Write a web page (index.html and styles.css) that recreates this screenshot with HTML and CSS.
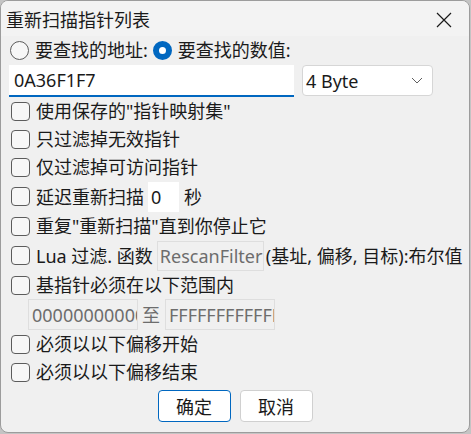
FILE: index.html
```html
<!DOCTYPE html>
<html lang="zh-CN">
<head>
<meta charset="utf-8">
<title>重新扫描指针列表</title>
<link rel="stylesheet" href="styles.css">
</head>
<body>
<div class="window">
  <div class="titlebar">
    <span class="title">重新扫描指针列表</span>
    <svg class="close" width="16" height="16" viewBox="0 0 16 16"><path d="M1 1 L15 15 M15 1 L1 15" stroke="#1a1a1a" stroke-width="1.2" fill="none"/></svg>
  </div>
  <div class="content">
    <div class="row r-radio">
      <span class="radio"></span><span class="lbl">要查找的地址:</span>
      <span class="radio on"></span><span class="lbl">要查找的数值:</span>
    </div>
    <div class="row r-input">
      <div class="addr">0A36F1F7</div>
      <div class="select"><span>4 Byte</span><svg width="12" height="7" viewBox="0 0 12 7"><path d="M1 1 L6 6 L11 1" stroke="#606060" stroke-width="1" fill="none"/></svg></div>
    </div>
    <div class="row"><span class="box"></span><span class="lbl">使用保存的"指针映射集"</span></div>
    <div class="row"><span class="box"></span><span class="lbl">只过滤掉无效指针</span></div>
    <div class="row"><span class="box"></span><span class="lbl">仅过滤掉可访问指针</span></div>
    <div class="row r-delay"><span class="box"></span><span class="lbl">延迟重新扫描</span><div class="num">0</div><span class="lbl">秒</span></div>
    <div class="row"><span class="box"></span><span class="lbl">重复"重新扫描"直到你停止它</span></div>
    <div class="row r-lua"><span class="box"></span><span class="lbl">Lua 过滤. 函数</span><input class="dis lua" type="text" value="RescanFilter" disabled><span class="lbl">(基址, 偏移, 目标):布尔值</span></div>
    <div class="row"><span class="box"></span><span class="lbl">基指针必须在以下范围内</span></div>
    <div class="row r-range"><input class="dis rng" type="text" value="0000000000000000" disabled><span class="to">至</span><input class="dis rng" type="text" value="FFFFFFFFFFFFFFFF" disabled></div>
    <div class="row"><span class="box"></span><span class="lbl">必须以以下偏移开始</span></div>
    <div class="row"><span class="box"></span><span class="lbl">必须以以下偏移结束</span></div>
    <div class="buttons">
      <button class="btn primary">确定</button>
      <button class="btn">取消</button>
    </div>
  </div>
</div>
</body>
</html>
```
FILE: styles.css
```css
html, body {
  margin: 0;
  padding: 0;
}
body {
  width: 471px;
  height: 434px;
  background: #c4c4c4;
  font-family: "Noto Sans", "Noto Sans CJK SC", sans-serif;
  color: #1a1a1a;
  overflow: hidden;
}
.window {
  width: 470px;
  height: 433px;
  box-sizing: border-box;
  border: 1px solid #9c9c9c;
  border-radius: 8px;
  background: #f0f0f0;
  overflow: hidden;
  display: flex;
  flex-direction: column;
}
.titlebar {
  height: 35px;
  flex: none;
  background: #f3f3f3;
  display: flex;
  align-items: center;
  justify-content: space-between;
  padding: 2px 17px 0 5px;
  box-sizing: border-box;
}
.title {
  font-size: 18px;
  line-height: 1;
}
.close {
  display: block;
}
.content {
  padding: 0 0 0 9px;
  display: flex;
  flex-direction: column;
}
.row {
  display: flex;
  align-items: center;
  height: 28px;
  flex: none;
}
.lbl {
  font-size: 18px;
  line-height: 1;
  white-space: nowrap;
}
.radio {
  width: 19px;
  height: 19px;
  box-sizing: border-box;
  border: 1px solid #5c5c5c;
  border-radius: 50%;
  background: #f7f7f7;
  margin-right: 6px;
  flex: none;
}
.radio.on {
  border: 6px solid #0067c0;
  background: #ffffff;
  margin-left: 5px;
}
.r-input {
  height: 32px;
  margin-top: 1px;
}
.addr {
  width: 285px;
  height: 32px;
  box-sizing: border-box;
  margin-left: -1px;
  background: #ffffff;
  border-bottom: 2px solid #0067c0;
  font-size: 18px;
  line-height: 30px;
  padding-left: 5px;
}
.select {
  width: 131px;
  height: 31px;
  box-sizing: border-box;
  margin-left: 8px;
  margin-top: -1px;
  background: #ffffff;
  border: 1px solid #d6d6d6;
  border-radius: 4px;
  display: flex;
  align-items: center;
  justify-content: space-between;
  padding: 0 9px 0 3px;
  font-size: 18px;
}
.box {
  width: 19px;
  height: 19px;
  box-sizing: border-box;
  border: 1px solid #5c5c5c;
  border-radius: 4px;
  background: #f7f7f7;
  margin-left: 1px;
  margin-right: 6px;
  flex: none;
}
.r-delay {
  height: 31px;
}
.num {
  width: 31px;
  height: 30px;
  background: #ffffff;
  margin: 0 5px 0 4px;
  font-size: 18px;
  line-height: 30px;
  padding-left: 3px;
  box-sizing: border-box;
}
.r-lua {
  height: 31px;
}
.dis {
  height: 30px;
  box-sizing: border-box;
  border: 1px solid #dedede;
  background: #f0f0f0;
  color: #6d6d6d;
  font-family: "Noto Sans", "Noto Sans CJK SC", sans-serif;
  font-size: 18px;
  padding: 0 0 0 2px;
  margin: 0;
  outline: none;
  border-radius: 0;
  flex: none;
}
.dis:disabled {
  color: #6d6d6d;
  background: #f0f0f0;
  -webkit-text-fill-color: #6d6d6d;
  opacity: 1;
}
.lua {
  width: 107px;
  margin: 0 2px 0 4px;
}
.r-range {
  height: 31px;
  padding-left: 18px;
}
.rng {
  width: 110px;
  height: 31px;
  padding-left: 3px;
}
.to {
  font-size: 18px;
  line-height: 1;
  color: #6d6d6d;
  margin: 0 5px 0 4px;
}
.buttons {
  display: flex;
  justify-content: center;
  gap: 9px;
  margin-top: 4px;
  padding-right: 9px;
}
.btn {
  width: 73px;
  height: 32px;
  box-sizing: border-box;
  background: #ffffff;
  border: 1px solid #d0d0d0;
  border-radius: 4px;
  font-family: "Noto Sans CJK SC", sans-serif;
  font-size: 18px;
  line-height: 1;
  color: #1a1a1a;
  padding: 0;
}
.btn.primary {
  border-color: #0067c0;
}
```
